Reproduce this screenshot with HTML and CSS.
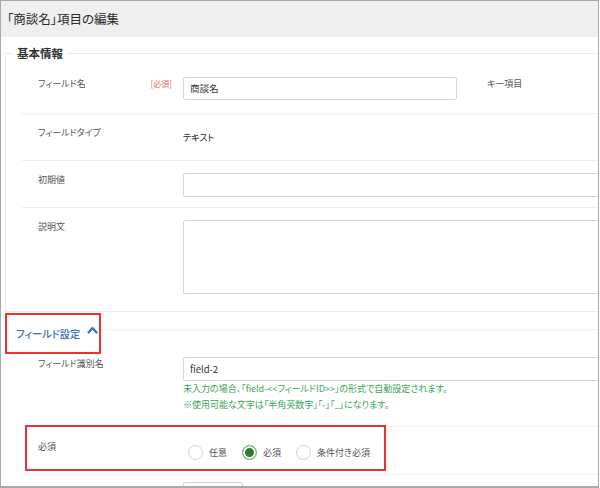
FILE: index.html
```html
<!DOCTYPE html>
<html lang="ja">
<head>
  <meta charset="UTF-8" />
  <title>「商談名」項目の編集</title>
  <link rel="stylesheet" href="styles.css">
</head>
<body>

  <div class="edit-frame">
    <div class="edit-header">「商談名」項目の編集</div>

    <fieldset class="edit-section basic-section">
      <legend class="section-legend">基本情報</legend>

      <div class="edit-row row-first">
        <div class="row-label">フィールド名<span class="req-badge">[必須]</span></div>
        <div class="row-control">
          <div class="text-input input-short">商談名</div>
          <span class="key-label">キー項目</span>
        </div>
      </div>

      <div class="edit-row">
        <div class="row-label">フィールドタイプ</div>
        <div class="row-control">
          <span class="plain-value">テキスト</span>
        </div>
      </div>

      <div class="edit-row">
        <div class="row-label">初期値</div>
        <div class="row-control">
          <div class="text-input input-wide"></div>
        </div>
      </div>

      <div class="edit-row row-last">
        <div class="row-label">説明文</div>
        <div class="row-control">
          <div class="text-input input-wide textarea"></div>
        </div>
      </div>
    </fieldset>

    <div class="edit-section field-section">
      <div class="section-head">
        <div class="head-box">
          <span class="head-title">フィールド設定</span>
          <svg class="head-caret" width="11" height="8" viewBox="0 0 11 8">
            <polyline points="1.5,6.5 5.5,2 9.5,6.5" fill="none" stroke="#3a6cc0" stroke-width="2.2" stroke-linecap="round" stroke-linejoin="round"/>
          </svg>
        </div>
        <div class="head-line"></div>
      </div>

      <div class="edit-row row-ident">
        <div class="row-label">フィールド識別名</div>
        <div class="row-control column">
          <div class="text-input input-wide">field-2</div>
          <div class="help-text">未入力の場合、「field-&lt;&lt;フィールドID&gt;&gt;」の形式で自動設定されます。</div>
          <div class="help-text">※使用可能な文字は「半角英数字」「-」「_」になります。</div>
        </div>
      </div>

      <div class="edit-row row-required">
        <div class="row-label">必須</div>
        <div class="row-control radios">
          <label class="radio-opt"><span class="radio-dot"></span>任意</label>
          <label class="radio-opt"><span class="radio-dot checked"></span>必須</label>
          <label class="radio-opt"><span class="radio-dot"></span>条件付き必須</label>
        </div>
        <div class="mark-box"></div>
      </div>

      <div class="edit-row row-cut">
        <div class="row-label"></div>
        <div class="row-control">
          <div class="text-input input-tiny"></div>
        </div>
      </div>
    </div>
  </div>

</body>
</html>
```

FILE: styles.css
```css
* {
  box-sizing: border-box;
}

body {
  margin: 0;
  background: #fff;
  font-family: "Noto Sans CJK JP", "Noto Sans", sans-serif;
  font-feature-settings: "palt";
  color: #555;
}

.edit-frame {
  width: 599px;
  height: 488px;
  border: 1px solid #a9a9a9;
  border-bottom-width: 2px;
  overflow: hidden;
}

.edit-header {
  height: 36px;
  line-height: 36px;
  padding-left: 6px;
  background: #efefef;
  font-size: 12.5px;
  color: #2a2a2a;
  white-space: nowrap;
}

/* 基本情報 */
.basic-section {
  margin: 9px 0 0 4px;
  padding: 0 0 6px 0;
  border: 1px solid #ececec;
  border-right: none;
  min-width: 0;
}

.section-legend {
  margin-left: 8px;
  padding: 0 3px;
  font-size: 11.5px;
  line-height: 14px;
  font-weight: bold;
  color: #333;
}

.edit-row {
  position: relative;
  display: flex;
  align-items: flex-start;
  margin-left: 16px;
  padding: 12px 0 10px;
  border-top: 1px solid #eeeeee;
  white-space: nowrap;
}

.row-first {
  border-top: none;
  padding: 17px 0 13px;
}

.row-last {
  padding-bottom: 11px;
}

.row-label {
  flex: 0 0 161px;
  display: flex;
  justify-content: space-between;
  padding: 0 11px 0 16px;
  font-size: 9px;
  line-height: 13px;
  color: #555;
}

.req-badge {
  font-size: 8px;
  color: #e06b6b;
}

.row-control {
  flex: 1;
  display: flex;
  align-items: flex-start;
  font-size: 9px;
  color: #333;
}

.row-control.column {
  flex-direction: column;
}

.text-input {
  height: 24px;
  line-height: 22px;
  padding: 0 6px;
  border: 1px solid #d4d4d4;
  border-radius: 2px;
  background: #fff;
  font-size: 9.5px;
  color: #333;
}

.input-short {
  width: 274px;
  height: 23px;
  line-height: 21px;
}

.input-wide {
  width: 440px;
}

.input-tiny {
  width: 60px;
}

.textarea {
  height: 74px;
}

.key-label {
  margin-left: 30px;
  line-height: 14px;
  font-size: 9px;
  color: #555;
}

.plain-value {
  line-height: 24px;
  font-size: 9px;
  color: #222;
}

/* フィールド設定 */
.field-section {
  margin-left: 4px;
}

.section-head {
  display: flex;
}

.head-box {
  width: 96px;
  height: 41px;
  margin-top: 1px;
  display: flex;
  align-items: center;
  padding-left: 9px;
  border: 2px solid #ee2f33;
  white-space: nowrap;
}

.head-title {
  font-size: 10.2px;
  font-weight: 500;
  color: #3a6cc0;
}

.head-caret {
  margin: 0 0 8px 7px;
}

.head-line {
  flex: 1;
  margin-top: 17px;
  border-top: 1px solid #eeeeee;
}

.field-section .edit-row {
  margin-left: 17px;
}

.row-ident {
  border-top: none;
  padding: 3px 0 13px;
}

.help-text {
  font-size: 9px;
  line-height: 16px;
  color: #3ca35a;
}

.help-text:first-of-type {
  margin-top: 1px;
}

.row-required {
  padding: 13px 0 10px;
}

.radios {
  align-items: center;
  height: 24px;
  padding-left: 5px;
}

.radio-opt {
  display: flex;
  align-items: center;
  margin-right: 15px;
  font-size: 9px;
  color: #555;
}

.radio-dot {
  width: 15px;
  height: 15px;
  margin-right: 6px;
  border: 1px solid #d0d0d0;
  border-radius: 50%;
  background: #fff;
}

.radio-dot.checked {
  border-color: #7dbb7d;
  background: #2d7a31;
  box-shadow: inset 0 0 0 2px #fff;
}

.mark-box {
  position: absolute;
  left: 3px;
  top: -2px;
  width: 361px;
  height: 46px;
  border: 2px solid #ee2f33;
}

.row-cut {
  padding-top: 7px;
}
```
